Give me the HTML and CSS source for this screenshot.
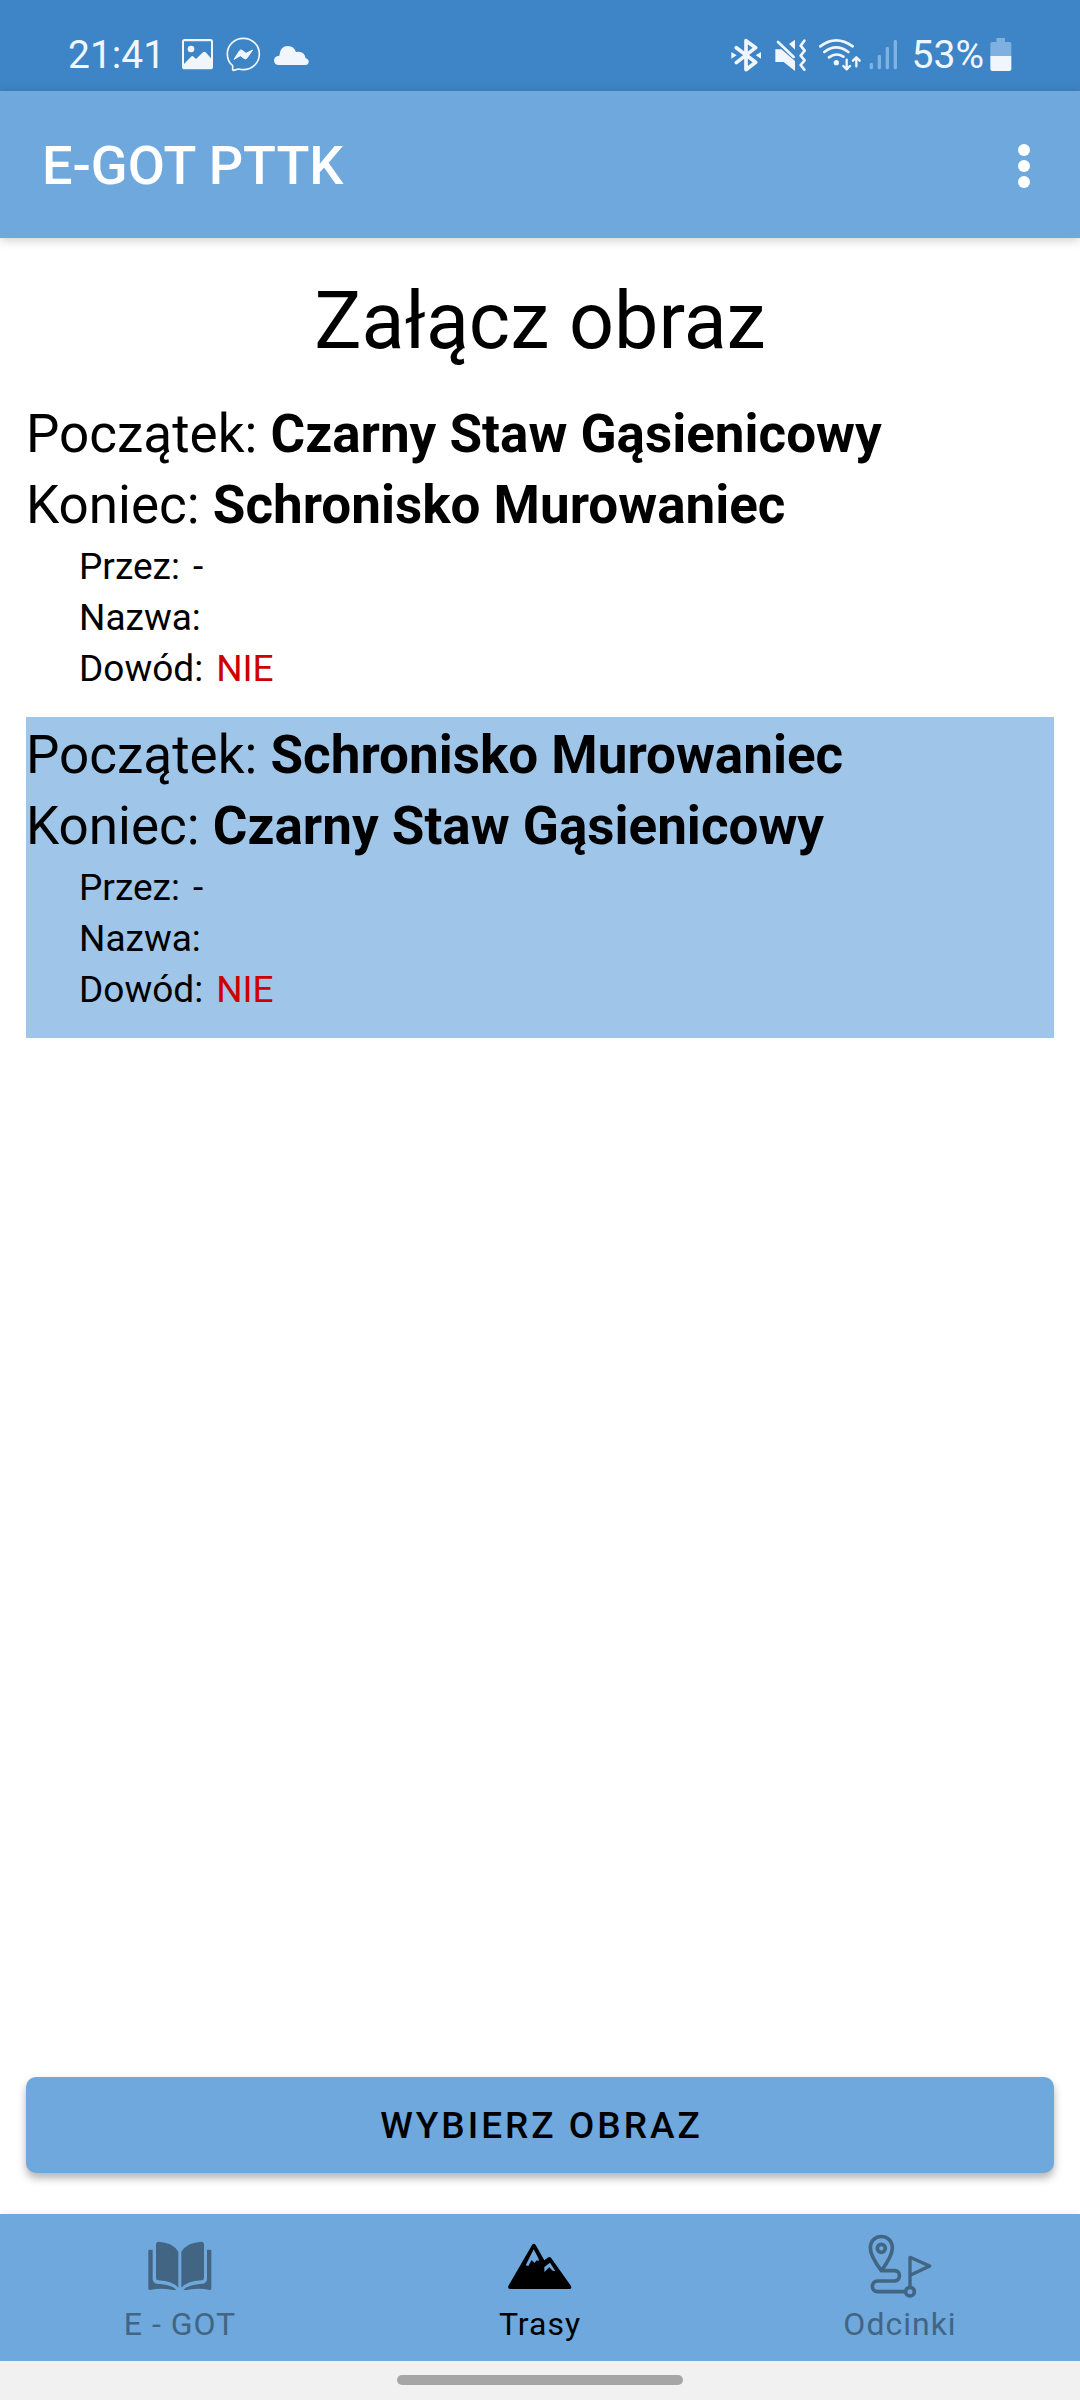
FILE: index.html
```html
<!DOCTYPE html>
<html lang="pl">
<head>
<meta charset="utf-8">
<meta name="viewport" content="width=device-width, initial-scale=1">
<title>E-GOT PTTK</title>
<link rel="stylesheet" href="styles.css">
</head>
<body>
<div class="status">
  <div class="status-group">
    <span class="status-text">21:41</span>
    <svg class="st-picture" viewBox="546 117 93 93" aria-hidden="true">
      <path fill="currentColor" fill-rule="evenodd" d="M554 117H631Q639 117 639 125V200Q639 208 631 208H554Q546 208 546 200V125Q546 117 554 117ZM552 124V192L573 170Q577 166 581 170L588 177L609 157Q613 153 617 157L633 175V124Z"/>
      <circle cx="573" cy="147" r="10" fill="currentColor"/>
    </svg>
    <svg class="st-messenger" viewBox="682 112 105 105" aria-hidden="true">
      <path fill="none" stroke="currentColor" stroke-width="5" stroke-linejoin="round" d="M734 116C761 116 782 136 782 163C782 190 761 210 734 210Q726 210 720 208L704 212Q701 212 702 208V198C692 190 686 177 686 163C686 136 707 116 734 116Z"/>
      <path fill="currentColor" stroke="currentColor" stroke-width="3" stroke-linejoin="round" d="M706 179L723 153Q726 149 730 152L742 161L762 151L745 175Q741 180 736 176L725 168Z"/>
    </svg>
    <svg class="st-cloud" viewBox="822 128 105 60" aria-hidden="true">
      <path fill="currentColor" d="M834 188Q822 186 822 174Q823 161 838 160Q840 131 864 131Q882 131 888 149Q914 145 917 168Q926 170 926 178Q926 187 917 188Z"/>
    </svg>
  </div>
  <div class="status-group status-right">
    <svg class="st-bluetooth" viewBox="97 109 90 102" aria-hidden="true">
      <path fill="none" stroke="currentColor" stroke-width="11" stroke-linecap="round" stroke-linejoin="round" d="M113 138L171 182L142 204V117L171 138L113 183"/>
      <path fill="currentColor" d="M98 151L114 161L98 171ZM187 151L171 161L187 171Z"/>
    </svg>
    <svg class="st-mute" viewBox="231 112 96 96" aria-hidden="true">
      <path fill="currentColor" d="M232 143H250L291 178V208L257 181H232ZM291 114V144L273 127Z"/>
      <path fill="none" stroke="currentColor" stroke-width="8" stroke-linecap="round" stroke-linejoin="round" d="M240 121L287 166"/>
      <path fill="none" stroke="currentColor" stroke-width="8" stroke-linecap="round" stroke-linejoin="round" d="M319 117L308 132L320 147L308 162L320 176L308 190L319 204"/>
    </svg>
    <svg class="st-wifi" viewBox="362 110 126 99" aria-hidden="true">
      <g fill="none" stroke="currentColor" stroke-width="8" stroke-linecap="round" stroke-linejoin="round">
        <path d="M366 135Q413 99 463 135M378 152Q413 124 450 152M392 168Q413 152 435 166"/>
        <path stroke-width="7" d="M445 175V203M435 194L445 204L455 194M474 195V168M464 178L474 168L484 178"/>
      </g>
      <circle cx="414" cy="184" r="8" fill="currentColor"/>
    </svg>
    <svg class="st-signal" viewBox="511 117 87 93" aria-hidden="true">
      <path fill="none" stroke="currentColor" stroke-width="10" stroke-linecap="round" d="M518 193V203M542 169V203M566 145V203M590 124V203"/>
    </svg>
    <span class="status-text status-percent">53%</span>
    <svg class="st-battery" viewBox="869 111 66 99" aria-hidden="true">
      <path class="battery-empty" d="M888 111H914V123H928Q933 123 933 129V165H870V129Q870 123 875 123H888Z"/>
      <path fill="currentColor" d="M870 165H933V204Q933 210 927 210H876Q870 210 870 204Z"/>
    </svg>
  </div>
</div>

<header class="appbar">
  <h1 class="appbar-title">E-GOT PTTK</h1>
  <button class="menu-button" type="button" aria-label="Więcej opcji">
    <svg class="menu-dots" viewBox="0 0 12 44" aria-hidden="true">
      <circle cx="6" cy="6" r="6"/><circle cx="6" cy="22" r="6"/><circle cx="6" cy="38" r="6"/>
    </svg>
  </button>
</header>

<main class="content">
  <h2 class="heading">Załącz obraz</h2>
  <ul class="routes">
    <li class="route">
      <p class="point">Początek: <strong>Czarny Staw Gąsienicowy</strong></p>
      <p class="point">Koniec: <strong>Schronisko Murowaniec</strong></p>
      <dl class="details">
        <div class="detail"><dt>Przez:</dt><dd>-</dd></div>
        <div class="detail"><dt>Nazwa:</dt><dd></dd></div>
        <div class="detail"><dt>Dowód:</dt><dd class="missing">NIE</dd></div>
      </dl>
    </li>
    <li class="route selected">
      <p class="point">Początek: <strong>Schronisko Murowaniec</strong></p>
      <p class="point">Koniec: <strong>Czarny Staw Gąsienicowy</strong></p>
      <dl class="details">
        <div class="detail"><dt>Przez:</dt><dd>-</dd></div>
        <div class="detail"><dt>Nazwa:</dt><dd></dd></div>
        <div class="detail"><dt>Dowód:</dt><dd class="missing">NIE</dd></div>
      </dl>
    </li>
  </ul>
  <button class="choose" type="button">WYBIERZ OBRAZ</button>
</main>

<nav class="tabs">
  <a class="tab" href="#egot">
    <svg class="tab-icon" viewBox="56 45 189 189" aria-hidden="true">
      <path fill="currentColor" d="M77 73Q77 66 84 65Q127 67 144 95V203Q128 184 84 181Q77 181 77 174ZM221 73Q221 66 214 65Q170 67 153 95V203Q170 184 214 181Q221 181 221 174Z"/>
      <path fill="currentColor" d="M54 91Q54 89 57 89H67V178Q68 190 80 191Q119 192 138 209Q129 212 115 208Q90 204 58 210Q54 210 54 206ZM243 91Q243 89 240 89H230V178Q229 190 217 191Q179 192 159 209Q168 212 182 208Q208 204 239 210Q243 210 243 206Z"/>
    </svg>
    <span>E - GOT</span>
  </a>
  <a class="tab active" href="#trasy" aria-current="page">
    <svg class="tab-icon" viewBox="56 45 189 189" aria-hidden="true">
      <path fill="currentColor" fill-rule="evenodd" d="M125 75Q130 67 136 75L162 121L172 113Q177 109 182 113L242 198Q245 207 237 207H60Q51 207 54 198ZM130 88L106 136L114 138L124 120L132 129L139 121L145 124V116ZM162 141V156L177 142L187 152L195 153L179 128Z"/>
    </svg>
    <span>Trasy</span>
  </a>
  <a class="tab" href="#odcinki">
    <svg class="tab-icon" viewBox="56 45 189 189" aria-hidden="true">
      <g fill="none" stroke="currentColor" stroke-width="11" stroke-linejoin="round" stroke-linecap="round">
        <path d="M93 152Q60 108 60 84C60 38 126 38 126 84Q126 108 93 152H133C152 152 152 183 133 183H82C61 183 61 215 82 215H163"/>
        <circle cx="93" cy="85" r="12"/>
        <circle cx="179" cy="215" r="13"/>
        <path stroke-width="10" d="M179 200V112L238 138L181 165"/>
      </g>
    </svg>
    <span>Odcinki</span>
  </a>
</nav>
<div class="gesture"><div class="gesture-pill"></div></div>
</body>
</html>
```
FILE: styles.css
```css
* {
  box-sizing: border-box;
}

body {
  margin: 0;
  min-height: 100vh;
  display: flex;
  flex-direction: column;
  background: #fff;
  color: #000;
  font-family: Roboto, sans-serif;
}

h1, h2, p, ul, dl, dd {
  margin: 0;
  padding: 0;
}

/* System status bar */
.status {
  display: flex;
  justify-content: space-between;
  align-items: center;
  height: 91px;
  padding: 18px 68px 0;
  background: #3d85c6;
  color: #f0f6fc;
}

.status-group {
  display: flex;
  align-items: center;
  gap: 13px;
}

.status-right {
  gap: 8px;
}

.status-text {
  font-size: 39px;
  line-height: 46px;
  margin-right: 4px;
}

.status-percent {
  margin: 0 0 0 6px;
}

.status-percent + svg {
  margin-left: -2px;
}

.st-picture { width: 31px; height: 31px; }
.st-messenger { width: 35px; height: 35px; }
.st-cloud { width: 35px; height: 20px; }
.st-bluetooth { width: 30px; height: 34px; margin-right: 6px; }
.st-mute { width: 32px; height: 32px; margin-right: 4px; }
.st-wifi { width: 42px; height: 33px; }
.st-signal { width: 29px; height: 31px; color: #7fb2e2; }
.st-battery { width: 22px; height: 33px; }
.battery-empty { fill: #7fb0df; }

/* App bar */
.appbar {
  position: relative;
  display: flex;
  justify-content: space-between;
  align-items: center;
  height: 147px;
  padding: 2px 24px 0 42px;
  background: #6fa8dc;
  color: #fff;
  box-shadow: 0 2px 10px rgba(0, 0, 0, 0.2);
}

.appbar-title {
  font-size: 54px;
  font-weight: 500;
  line-height: 62px;
}

.menu-button {
  display: flex;
  align-items: center;
  justify-content: center;
  width: 64px;
  height: 96px;
  padding: 0;
  border: 0;
  background: none;
  color: inherit;
}

.menu-dots {
  width: 12px;
  height: 44px;
  fill: currentColor;
}

/* Route list */
.content {
  flex: 1;
  display: flex;
  flex-direction: column;
  padding: 37px 26px 41px;
}

.heading {
  margin-bottom: 28px;
  font-size: 79px;
  font-weight: 400;
  line-height: 93px;
  text-align: center;
}

.routes {
  flex: 1;
  list-style: none;
}

.route {
  padding: 3px 0 23px;
}

.selected {
  background: #9fc5e8;
}

.point {
  font-size: 53px;
  line-height: 71px;
}

.point strong {
  font-weight: 700;
}

.details {
  padding-left: 53px;
  font-size: 37px;
  line-height: 51px;
}

.detail {
  display: flex;
  gap: 13px;
}

.missing {
  color: #c00;
}

.choose {
  height: 96px;
  padding: 2px 0 0 3px;
  border: 0;
  border-radius: 10px;
  background: #6fa8dc;
  box-shadow: 0 5px 8px rgba(0, 0, 0, 0.3);
  color: #000;
  font: 500 37px/44px Roboto, sans-serif;
  letter-spacing: 3px;
}

/* Bottom navigation */
.tabs {
  display: flex;
  height: 147px;
  background: #6fa8dc;
  box-shadow: 0 -1px 6px rgba(0, 0, 0, 0.08);
}

.tab {
  flex: 1;
  display: flex;
  flex-direction: column;
  align-items: center;
  gap: 7px;
  padding-top: 21px;
  color: #426584;
  font-size: 32px;
  line-height: 38px;
  letter-spacing: 1px;
  text-decoration: none;
}

.active {
  color: #000;
}

.tab-icon {
  width: 63px;
  height: 63px;
  overflow: visible;
}

/* System gesture area */
.gesture {
  display: flex;
  justify-content: center;
  height: 39px;
  padding-top: 14px;
  background: #f1f1f1;
}

.gesture-pill {
  width: 286px;
  height: 10px;
  border-radius: 5px;
  background: #a6a6a6;
}
```
